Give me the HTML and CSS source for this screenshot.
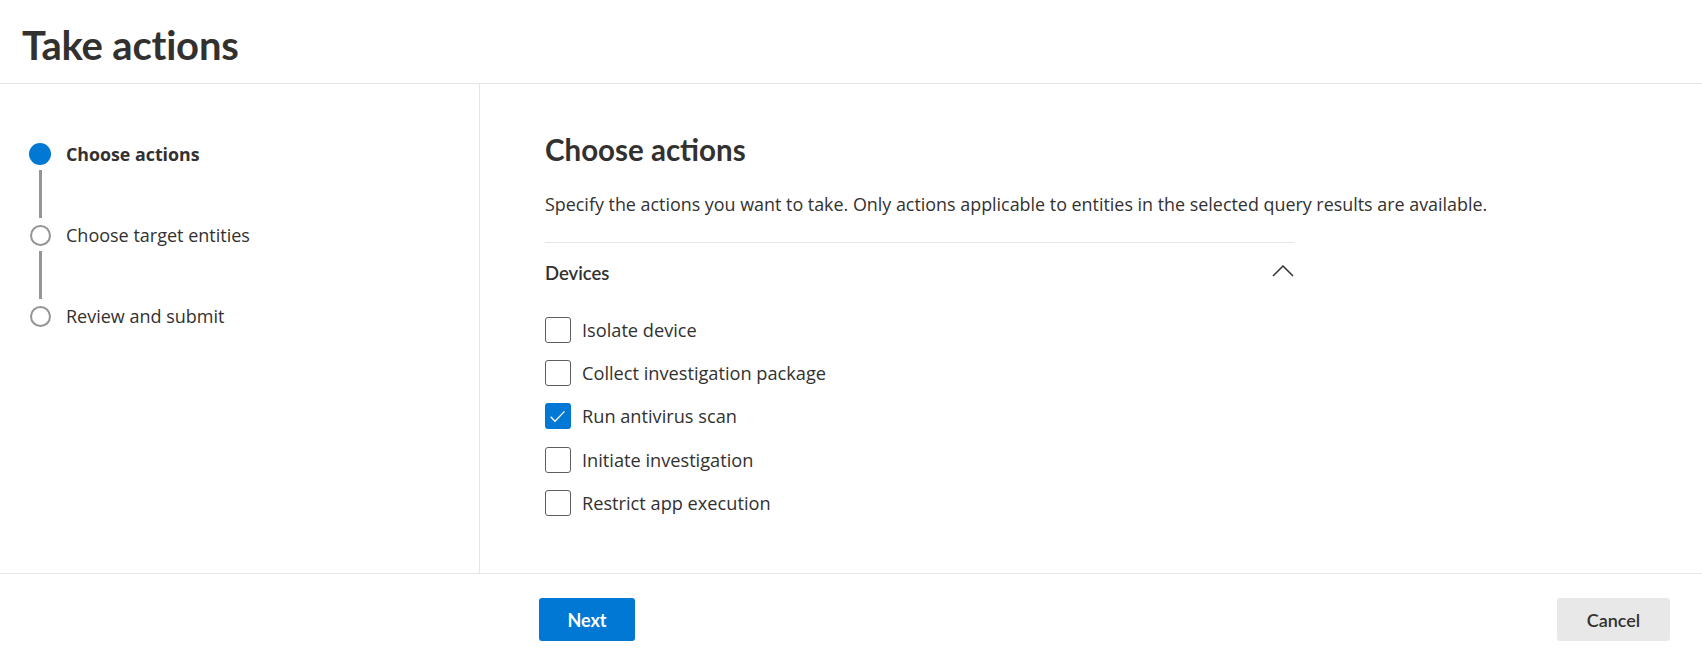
FILE: index.html
```html
<!DOCTYPE html>
<html lang="en">
<head>
<meta charset="utf-8">
<title>Take actions</title>
<link rel="stylesheet" href="styles.css">
</head>
<body>
<div class="panel">
  <header class="header">
    <h1 class="title">Take actions</h1>
  </header>
  <div class="body">
    <nav class="steps">
      <div class="step step-current">
        <span class="dot-wrap"><span class="dot dot-filled"></span></span>
        <span class="step-label">Choose actions</span>
      </div>
      <div class="connector"></div>
      <div class="step">
        <span class="dot-wrap"><span class="dot"></span></span>
        <span class="step-label">Choose target entities</span>
      </div>
      <div class="connector"></div>
      <div class="step">
        <span class="dot-wrap"><span class="dot"></span></span>
        <span class="step-label">Review and submit</span>
      </div>
    </nav>
    <main class="content">
      <h2 class="heading">Choose actions</h2>
      <p class="desc">Specify the actions you want to take. Only actions applicable to entities in the selected query results are available.</p>
      <section class="group">
        <div class="group-head">
          <span class="group-title">Devices</span>
          <svg class="chevron" width="22" height="13" viewBox="0 0 22 13"><polyline points="1,12 11,2 21,12" fill="none" stroke="#323130" stroke-width="1.5"/></svg>
        </div>
        <ul class="options">
          <li class="option"><span class="box"></span><span class="opt-label">Isolate device</span></li>
          <li class="option"><span class="box"></span><span class="opt-label">Collect investigation package</span></li>
          <li class="option"><span class="box box-checked"><svg width="26" height="26" viewBox="0 0 26 26"><polyline points="5.7,13.8 10,18.2 19.5,8.4" fill="none" stroke="#ffffff" stroke-width="1.3"/></svg></span><span class="opt-label">Run antivirus scan</span></li>
          <li class="option"><span class="box"></span><span class="opt-label">Initiate investigation</span></li>
          <li class="option"><span class="box"></span><span class="opt-label">Restrict app execution</span></li>
        </ul>
      </section>
    </main>
  </div>
  <footer class="footer">
    <button class="btn btn-primary">Next</button>
    <button class="btn btn-default">Cancel</button>
  </footer>
</div>
</body>
</html>
```

FILE: styles.css
```css
* { box-sizing: border-box; }

html, body {
  margin: 0;
  padding: 0;
  background: #ffffff;
}

body {
  font-family: "Open Sans", "Noto Sans", sans-serif;
  color: #323130;
  width: 1702px;
  height: 655px;
  overflow: hidden;
}

.panel {
  display: flex;
  flex-direction: column;
  height: 655px;
}

.header {
  height: 84px;
  border-bottom: 1px solid #e5e5e5;
  padding: 21px 22px 0;
  flex: none;
}

.title {
  margin: 0;
  font-family: Lato, "Open Sans", sans-serif;
  font-size: 40px;
  line-height: 48px;
  font-weight: 700;
  color: #323130;
  letter-spacing: -0.2px;
}

.body {
  display: flex;
  height: 489px;
  flex: none;
}

.steps {
  width: 480px;
  border-right: 1px solid #e5e5e5;
  padding: 59px 0 0 29px;
  display: flex;
  flex-direction: column;
  flex: none;
}

.step {
  display: flex;
  align-items: center;
  height: 22px;
}

.dot-wrap {
  width: 22px;
  height: 22px;
  display: flex;
  align-items: center;
  justify-content: center;
  flex: none;
}

.dot {
  width: 21px;
  height: 21px;
  border-radius: 50%;
  border: 2.5px solid #979593;
  background: #ffffff;
}

.dot-filled {
  width: 22px;
  height: 22px;
  border: none;
  background: #0078d4;
}

.step-label {
  margin-left: 15px;
  font-size: 18px;
  line-height: 22px;
  white-space: nowrap;
}

.step-current .step-label {
  font-size: 17.8px;
  font-weight: 700;
}

.connector {
  width: 3px;
  height: 48px;
  background: #979593;
  margin: 5px 0 6px 9.5px;
}

.content {
  padding: 48px 0 0 65px;
  flex: 1;
}

.heading {
  margin: 0;
  font-family: Lato, "Open Sans", sans-serif;
  font-size: 29.5px;
  line-height: 36px;
  font-weight: 700;
}

.desc {
  margin: 24px 0 0;
  font-size: 17.9px;
  line-height: 24px;
  white-space: nowrap;
}

.group {
  width: 749px;
  margin-top: 26px;
  border-top: 1px solid #e5e5e5;
}

.group-head {
  display: flex;
  justify-content: space-between;
  align-items: flex-start;
  padding-top: 18px;
}

.group-title {
  font-family: Lato, "Open Sans", sans-serif;
  font-size: 18.5px;
  line-height: 24px;
  font-weight: 600;
}

.chevron {
  margin-top: 3px;
}

.options {
  list-style: none;
  margin: 32px 0 0;
  padding: 0;
  display: flex;
  flex-direction: column;
  gap: 17.2px;
}

.option {
  display: flex;
  align-items: center;
  height: 26px;
}

.box {
  width: 26px;
  height: 26px;
  border: 1px solid #605e5c;
  border-radius: 3px;
  flex: none;
  background: #ffffff;
}

.box-checked {
  border: none;
  background: #0078d4;
}

.box svg {
  display: block;
}

.opt-label {
  margin-left: 11px;
  font-size: 18.2px;
  line-height: 24px;
  white-space: nowrap;
}

.footer {
  height: 82px;
  border-top: 1px solid #e5e5e5;
  display: flex;
  justify-content: space-between;
  align-items: flex-start;
  padding: 24px 32px 0 539px;
  flex: none;
}

.btn {
  height: 43px;
  border: none;
  border-radius: 3px;
  font-family: Lato, "Open Sans", sans-serif;
  font-size: 18px;
  padding: 0;
  cursor: pointer;
}

.btn-primary {
  width: 96px;
  background: #0078d4;
  color: #ffffff;
  font-weight: 700;
}

.btn-default {
  width: 113px;
  background: #e8e8e8;
  color: #323130;
  font-weight: 600;
}
```
